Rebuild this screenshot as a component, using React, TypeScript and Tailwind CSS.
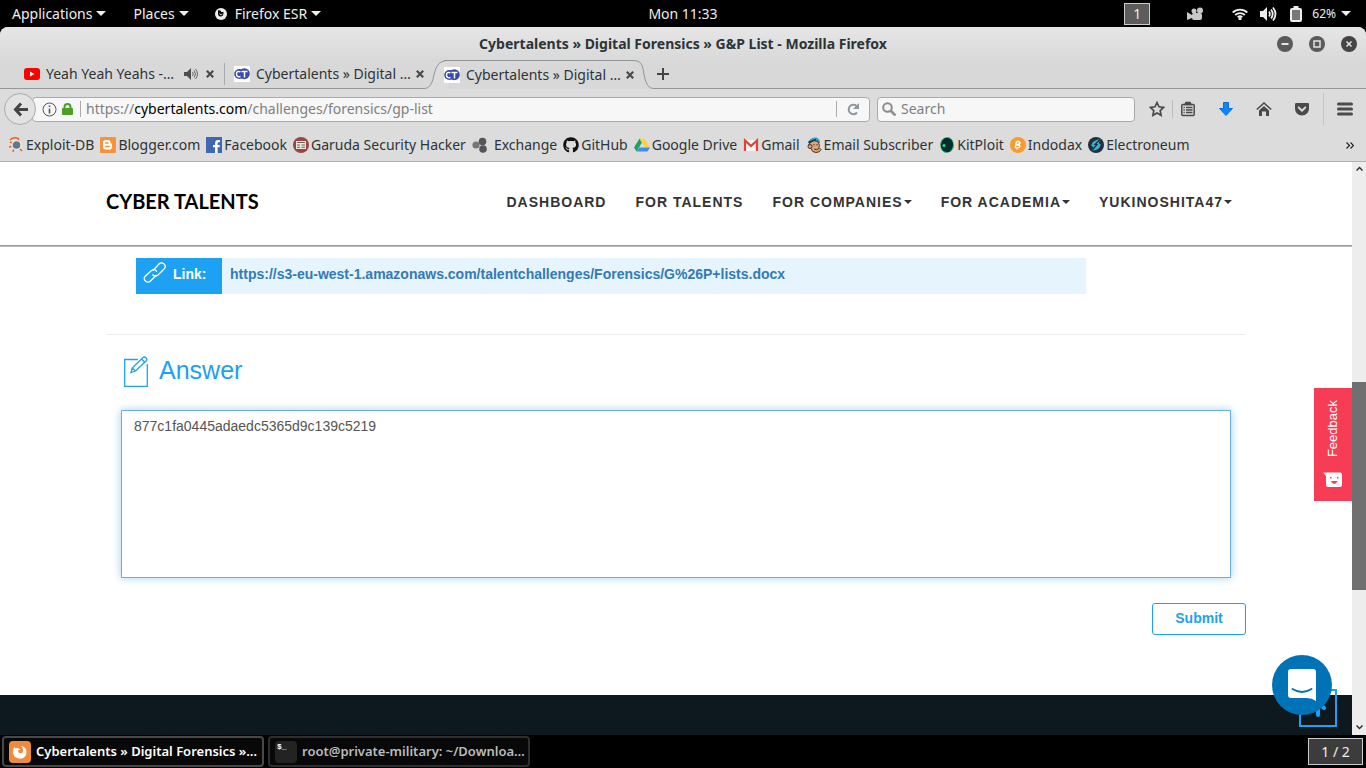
import type { ReactNode } from "react";
import { FaGithub, FaGetPocket, FaFacebookF } from "react-icons/fa";

export default function App() {
  return (
    <div className="flex min-h-screen flex-col bg-black font-['Noto_Sans',sans-serif] text-sm text-[#2e3436]">
      <TopBar />
      <div className="flex flex-1 flex-col overflow-hidden rounded-t-lg bg-[#dcdcdc]">
        <TitleBar />
        <TabStrip />
        <Toolbar />
        <Bookmarks />
        <div className="flex flex-1">
          <Page />
          <Scrollbar />
        </div>
      </div>
      <Taskbar />
    </div>
  );
}

function Caret() {
  return (
    <svg width="10" height="5" viewBox="0 0 10 5" fill="currentColor">
      <path d="M0 0h10L5 5z" />
    </svg>
  );
}

function TopBar() {
  return (
    <header className="grid h-[27px] grid-cols-[1fr_auto_1fr] items-center text-sm text-[#eeeeec]">
      <nav className="flex items-center pl-3">
        <button className="flex items-center gap-1">
          Applications <Caret />
        </button>
        <button className="ml-[27px] flex items-center gap-1">
          Places <Caret />
        </button>
        <button className="ml-[26px] flex items-center gap-1">
          <svg className="mr-1" width="12" height="12" viewBox="0 0 12 12">
            <circle cx="6" cy="6" r="6" fill="#eee" />
            <path d="M3 2.500c2-.6 3 .3 3.200 1.500H8.500c.3 3-1 4.500-3 4.500C3.800 8.500 2.800 7 3 5.500z" fill="#000" />
            <path d="M4.500 5.500C5 7 6.500 7 7.500 6" stroke="#eee" fill="none" />
          </svg>
          Firefox ESR <Caret />
        </button>
      </nav>
      <time>Mon 11:33</time>
      <div className="flex items-center justify-end pr-[15px]">
        <button className="flex h-[22px] w-[26px] items-center justify-center border border-[#ccc] bg-[#5c5c5c]">1</button>
        <svg className="ml-[37px]" width="17" height="14" viewBox="0 0 17 14" fill="#c8c8c8">
          <circle cx="7" cy="4" r="2.500" />
          <circle cx="13" cy="3.500" r="3" />
          <rect x="5" y="6" width="10" height="7" rx="2" />
          <path d="M0 5l5 3v3l-5 2z" />
        </svg>
        <svg className="ml-7" width="16" height="12" viewBox="0 0 16 12" fill="none" stroke="#eee" strokeWidth="1.800">
          <path d="M.7 4.500a10.500 10.500 0 0 1 14.600 0M3.200 7a7 7 0 0 1 9.600 0M5.700 9.300a3.500 3.500 0 0 1 4.600 0" />
          <circle cx="8" cy="10.700" r=".7" fill="#eee" />
        </svg>
        <svg className="ml-3" width="17" height="16" viewBox="0 0 17 16" fill="none" stroke="#eee" strokeWidth="1.800">
          <path d="M0 5h3l4-4v14l-4-4H0z" fill="#eee" stroke="none" />
          <path d="M9 5.500q1.800 2.500 0 5M11 3.500q3.400 4.500 0 9M13 1.500q5 6.500 0 13" />
        </svg>
        <svg className="ml-[13px]" width="12" height="16" viewBox="0 0 12 16">
          <path d="M3.500 0h5v3h-5z" fill="#eee" />
          <rect x="1" y="3" width="10" height="12" rx="1" fill="#777" stroke="#eee" strokeWidth="2" />
        </svg>
        <span className="mr-[5px] ml-[10px] text-xs">62%</span>
        <Caret />
      </div>
    </header>
  );
}

function TitleBar() {
  return (
    <div className="grid h-[33px] grid-cols-[1fr_auto_1fr] items-center bg-linear-to-b from-[#e6e6e6] to-[#d9d9d9] px-[9px]">
      <span />
      <h1 className="text-sm leading-8 font-bold">Cybertalents » Digital Forensics » G&amp;P List - Mozilla Firefox</h1>
      <div className="flex justify-end gap-4 text-[#5a5a5a]">
        <WindowButton label="Minimize">
          <path d="M4.500 8h7" strokeWidth="2" />
        </WindowButton>
        <WindowButton label="Maximize">
          <path d="M5 5h6v6H5z" strokeWidth="1.500" />
        </WindowButton>
        <WindowButton label="Close">
          <path d="M5.500 5.500l5 5M10.500 5.500l-5 5" strokeWidth="1.500" />
        </WindowButton>
      </div>
    </div>
  );
}

function WindowButton({ label, children }: { label: string; children: ReactNode }) {
  return (
    <button aria-label={label} className="last:text-[#444]">
      <svg width="16" height="16" viewBox="0 0 16 16" fill="none" stroke="#e4e4e4">
        <circle cx="8" cy="8" r="8" fill="currentColor" stroke="none" />
        {children}
      </svg>
    </button>
  );
}

function CloseTab() {
  return (
    <button aria-label="Close tab">
      <svg width="8" height="8" viewBox="0 0 8 8" stroke="#4a4a4a" strokeWidth="2.200">
        <path d="M.8.8l6.400 6.400M7.200.8L.8 7.200" />
      </svg>
    </button>
  );
}

function CtIcon() {
  return (
    <svg width="16" height="16" viewBox="0 0 16 16">
      <path fill="#fff" d="M0 0h16v16H0z" />
      <ellipse cx="5.500" cy="8" rx="5.300" ry="5" fill="#3a49ae" />
      <circle cx="10.300" cy="7.700" r="5.500" fill="#3a49ae" />
      <path d="M6.500 5.800Q2.500 4.500 2.500 8t4 2.500M7.500 5.500h6M10.500 5.500v6" fill="none" stroke="#fff" strokeWidth="1.500" />
    </svg>
  );
}

function TabStrip() {
  return (
    <div className="flex h-[29px] bg-[#d8d8d8]">
      <div className="flex items-center border-b border-[#989898] pl-6">
        <svg width="16" height="12" viewBox="0 0 16 12">
          <rect width="16" height="12" rx="3" fill="#f00" />
          <path d="M6 3.500v5L10.500 6z" fill="#fff" />
        </svg>
        <span className="ml-[6px] w-[138px] truncate">Yeah Yeah Yeahs -…</span>
        <svg className="mr-2" width="14" height="12" viewBox="0 0 14 12" fill="none" stroke="#666">
          <path d="M0 4h3l4-4v12L3 8H0z" fill="#4d4d4d" stroke="none" />
          <path d="M8.500 4q1.500 2 0 4M10 2.500q3 3.500 0 7M11.500 1q4 5 0 10" />
        </svg>
        <CloseTab />
        <span className="mr-[9px] ml-[10px] h-[22px] w-px bg-[#aaa]" />
        <CtIcon />
        <span className="ml-[6px] w-[160px] truncate">Cybertalents » Digital …</span>
        <CloseTab />
      </div>
      <svg width="24" height="29" viewBox="0 0 24 29" className="shrink-0">
        <path d="M0 28.500C5 28.500 7.500 25 9.500 17S13 .5 24 .5V29H0z" fill="#dcdcdc" />
        <path d="M0 28.500C5 28.500 7.500 25 9.500 17S13 .5 24 .5" fill="none" stroke="#8f9498" />
      </svg>
      <div className="-mx-1 flex items-center border-t border-[#8f9498]">
        <CtIcon />
        <span className="ml-[6px] w-[160px] truncate">Cybertalents » Digital …</span>
        <CloseTab />
      </div>
      <svg width="24" height="29" viewBox="0 0 24 29" className="shrink-0">
        <path d="M3 .5C14 .5 12.500 9 14.500 17S19 28.500 24 28.500" fill="none" stroke="#8f9498" />
      </svg>
      <div className="flex flex-1 items-center border-b border-[#989898] pl-[3px]">
        <button aria-label="New tab">
          <svg width="12" height="12" viewBox="0 0 12 12" stroke="#444" strokeWidth="2">
            <path d="M6 0v12M0 6h12" />
          </svg>
        </button>
      </div>
    </div>
  );
}

function Toolbar() {
  return (
    <div className="flex h-10 items-center pr-[13px] pl-1">
      <button aria-label="Back" className="z-10 flex size-8 items-center justify-center rounded-full border border-[#aaa] bg-[#e2e2e2]">
        <svg width="15" height="15" viewBox="0 0 15 15" fill="none" stroke="#444" strokeWidth="3">
          <path d="M8 1.500L2.500 7.500 8 13.500M2.500 7.500H15" />
        </svg>
      </button>
      <div className="-ml-1 flex h-[25px] flex-1 items-center rounded-sm border border-[#aaa] bg-[#f7f7f7] px-[9px]">
        <svg width="15" height="15" viewBox="0 0 15 15" fill="none" stroke="#555">
          <circle cx="7.500" cy="7.500" r="6.500" />
          <path d="M7.500 3.500v1.500M7.500 6.500v5" strokeWidth="1.600" />
        </svg>
        <svg className="ml-[5px]" width="11" height="12" viewBox="0 0 11 12">
          <path d="M2.500 6V4a3 3 0 0 1 6 0v2" fill="none" stroke="#4a9f26" strokeWidth="2" />
          <rect y="5" width="11" height="7" rx="1" fill="#4a9f26" />
        </svg>
        <span className="mr-[5px] ml-[7px] h-4 w-px bg-[#aaa]" />
        <a href="#url" className="flex-1 text-[#808080]">
          https://<span className="text-black">cybertalents.com</span>/challenges/forensics/gp-list
        </a>
        <span className="mr-[10px] h-4 w-px bg-[#aaa]" />
        <button aria-label="Reload">
          <svg width="13" height="13" viewBox="0 0 13 13">
            <path d="M10 9.500A4.700 4.700 0 1 1 9.500 3" fill="none" stroke="#8b98a3" strokeWidth="2" />
            <path d="M12 0v6H6z" fill="#8b98a3" />
          </svg>
        </button>
      </div>
      <label className="ml-[7px] flex h-[25px] w-[258px] items-center rounded-sm border border-[#aaa] bg-[#f7f7f7] pl-1">
        <svg width="14" height="14" viewBox="0 0 14 14" fill="none" stroke="#8c8c8c" strokeWidth="2">
          <circle cx="5.500" cy="5.500" r="4.300" />
          <path d="M8.500 8.500l5 5" strokeWidth="2.500" />
        </svg>
        <input aria-label="Search" placeholder="Search" className="ml-[5px] min-w-0 flex-1 outline-none placeholder:text-[#808080]" />
      </label>
      <div className="ml-[14px] flex items-center text-[#4a4a4a]">
        <button aria-label="Bookmark this page">
          <svg width="16" height="16" viewBox="0 0 16 16" fill="none" stroke="currentColor" strokeWidth="1.700">
            <path d="M8 1.500l2 4.300 4.700.6-3.500 3.200.9 4.700L8 12l-4.100 2.300.9-4.700L1.300 6.400 6 5.800z" />
          </svg>
        </button>
        <span className="mx-[7px] h-[18px] w-px bg-[#bbb]" />
        <button aria-label="Library">
          <svg width="16" height="16" viewBox="0 0 16 16" fill="none" stroke="currentColor" strokeWidth="1.500">
            <path d="M5 3.500L6 1.500h4l1 2z" fill="currentColor" />
            <rect x="1.800" y="3.500" width="12.400" height="11" rx="1" />
            <path d="M3.500 6.500h1.300M6 6.500h6.500M3.500 9h1.300M6 9h6.500M3.500 11.500h1.300M6 11.500h6.500" />
          </svg>
        </button>
        <button aria-label="Downloads" className="ml-[22px]">
          <svg width="16" height="16" viewBox="0 0 16 16">
            <path d="M5.500 1.500h5v6h4L8 14.500l-6.500-7h4z" fill="#0a84ff" stroke="#0b6fd6" />
          </svg>
        </button>
        <button aria-label="Home" className="ml-[22px]">
          <svg width="16" height="16" viewBox="0 0 16 16">
            <path d="M.8 8.500L8 2l7.200 6.500" fill="none" stroke="currentColor" strokeWidth="1.600" />
            <path d="M3 9.500l5-4.500 5 4.500V15h-3v-4.500H6V15H3z" fill="currentColor" />
          </svg>
        </button>
        <button aria-label="Pocket" className="ml-[22px]">
          <FaGetPocket size={16} />
        </button>
        <span className="mx-[13px] h-8 w-px bg-[#c4c4c4]" />
        <button aria-label="Menu">
          <svg width="16" height="14" viewBox="0 0 16 14" stroke="currentColor" strokeWidth="3" strokeLinecap="round">
            <path d="M1.500 2h13M1.500 7h13M1.500 12h13" />
          </svg>
        </button>
      </div>
    </div>
  );
}

function Bookmarks() {
  return (
    <nav className="flex h-[33px] items-center gap-[6px] border-b border-[#b0b0b0] pr-3 pl-2">
      <Bookmark label="Exploit-DB">
        <path d="M2 5l4 2M1 10l4-1M5 15l1-4M14 14l-3-3M11 2l-2 3" stroke="#e86a24" strokeWidth="1.500" />
        <circle cx="8.500" cy="8" r="4.500" fill="#62778a" stroke="#e8e8e8" strokeWidth="1.500" />
        <path d="M2 3q4-4 9-1" fill="none" stroke="#e86a24" strokeWidth="1.500" />
      </Bookmark>
      <Bookmark label="Blogger.com">
        <rect width="16" height="16" rx="1" fill="#f5923a" />
        <path d="M5.500 3H8q2.500 0 2.500 2.500 0 1.200 1.500 1.200v3q0 2.800-2.500 2.800h-4Q3 12.500 3 10V5.500Q3 3 5.500 3z" fill="#fff" />
        <path d="M5.500 6h2.500M5.500 9.500h4" stroke="#f5923a" strokeWidth="1.400" strokeLinecap="round" />
      </Bookmark>
      <Bookmark label="Facebook">
        <path fill="#4267b2" d="M0 0h16v16H0z" />
        <FaFacebookF x="4" y="3" size={13} color="#fff" />
      </Bookmark>
      <Bookmark label="Garuda Security Hacker">
        <circle cx="8" cy="8" r="8" fill="#9c4444" />
        <rect x="3" y="4" width="10" height="8" fill="#eee9dc" />
        <path d="M4 5.500h8M4 8h3M8.500 8H12M4 10.300h3M8.500 10.300H12" stroke="#6b6458" />
      </Bookmark>
      <Bookmark label="Exchange" wide>
        <circle cx="4" cy="8" r="3.600" fill="#777" />
        <circle cx="10.500" cy="4.500" r="3.800" fill="#555" />
        <circle cx="11" cy="12" r="3.800" fill="#555" />
      </Bookmark>
      <Bookmark label="GitHub">
        <FaGithub size={16} color="#111" />
      </Bookmark>
      <Bookmark label="Google Drive">
        <path d="M5.500 1.500L0 10.500l2.500 4L8 5.500z" fill="#1da462" />
        <path d="M5.500 1.500h5l5.500 9h-5z" fill="#ffcf48" />
        <path d="M5.200 10.500H16l-2.500 4h-11z" fill="#4688f1" />
      </Bookmark>
      <Bookmark label="Gmail">
        <path d="M1 3h14v11H1z" fill="#f4f4f4" />
        <path d="M2 14V3.500l6 5.500 6-5.500V14" fill="none" stroke="#db4437" strokeWidth="2.200" />
      </Bookmark>
      <Bookmark label="Email Subscriber">
        <path d="M2 6q1-5 7-5.500 5 0 5 5.500z" fill="#3a9cc8" />
        <path d="M3 7l4-3.500 5 1 1.500 4-.5 2 2 2q-1 3-5 3-4 0-5-4L2.500 10z" fill="#dba77c" stroke="#4c3326" />
        <path d="M8 7v1.500M11 7v1.500M8 12q3 1.500 5-.5" fill="none" stroke="#4c3326" />
        <circle cx="4" cy="9.500" r="2" fill="#dba77c" stroke="#4c3326" />
        <path d="M2.500 5.500L10 2.500" stroke="#26333d" strokeWidth="1.500" />
      </Bookmark>
      <Bookmark label="KitPloit">
        <ellipse cx="8" cy="8" rx="6.500" ry="7.500" fill="#062d2c" stroke="#19b676" strokeDasharray="8 3" />
        <circle cx="5" cy="8.500" r="1.500" fill="#12e88d" />
      </Bookmark>
      <Bookmark label="Indodax">
        <circle cx="8" cy="8" r="8" fill="#f79b30" />
        <path d="M6.500 4.500L5.200 11.200M6 4.800h2.800q1.600.3 1 1.800-.5 1.200-3.600 1.200 4.200 0 3.600 1.800-.5 1.500-4.300 1.300M8 3.500l-.2 1.200M7 11.300l-.2 1.200" fill="none" stroke="#fff" strokeWidth="1.400" />
      </Bookmark>
      <Bookmark label="Electroneum">
        <circle cx="8" cy="8" r="8" fill="#22303c" />
        <path d="M12.500 2Q5 3 3.500 7.500q-.5 2 2 2.300L3.500 14Q11 13 12.500 8.500q.5-2-2-2.300z" fill="#35b5dc" />
        <path d="M12 2.500L7 7.500h2L4 13.500" fill="none" stroke="#22303c" strokeWidth="1.200" />
      </Bookmark>
      <button aria-label="More bookmarks" className="ml-auto">
        <svg width="8" height="7" viewBox="0 0 8 7" fill="none" stroke="#222" strokeWidth="1.200">
          <path d="M.5.5l3 3-3 3M4.500.5l3 3-3 3" />
        </svg>
      </button>
    </nav>
  );
}

function Bookmark({ label, wide, children }: { label: string; wide?: boolean; children: ReactNode }) {
  return (
    <a href="#bookmark" className={`flex items-center whitespace-nowrap ${wide ? "gap-[6px]" : "gap-[2px]"}`}>
      <svg width="16" height="16" viewBox="0 0 16 16" className="shrink-0">
        {children}
      </svg>
      {label}
    </a>
  );
}

function Page() {
  return (
    <div className="relative flex min-w-0 flex-1 flex-col bg-white font-['Liberation_Sans',Arial,sans-serif]">
      <div className="border-b border-[#999] shadow-[0_1px_0_#bbb]">
        <div className="mx-auto flex h-[83px] w-full max-w-[1140px] items-center justify-between pr-[14px]">
          <a href="#home" className="pb-[6px] font-['Lato',sans-serif] text-xl font-bold text-black">
            CYBER TALENTS
          </a>
          <nav className="flex gap-[29px] pb-1 text-sm font-bold tracking-[1px] text-[#333]">
            <a href="#dashboard">DASHBOARD</a>
            <a href="#talents">FOR TALENTS</a>
            <MenuLink label="FOR COMPANIES" />
            <MenuLink label="FOR ACADEMIA" />
            <MenuLink label="YUKINOSHITA47" />
          </nav>
        </div>
      </div>

      <main className="mx-auto w-full max-w-[1140px] flex-1">
        <div className="mx-[30px] mt-3 flex h-9 max-w-[950px] bg-[#e6f4fe] text-sm font-bold">
          <div className="flex w-[86px] bg-[#1da1f2] pt-[3px] pl-[7px] text-white">
            <svg width="24" height="24" viewBox="0 0 24 24" fill="none" stroke="currentColor" strokeWidth="1.300">
              <path d="M10 9.500l6-6.500c3-3 8 1 5.500 4.500l-6.500 6.500c-2.500 2-4.500.8-5.500-.5" />
              <path d="M13.500 14l-6 6c-3 3-8-1-5.500-4.500L8.500 9.500c2.500-2 5-.5 5.200 1.500" />
            </svg>
            <span className="ml-[6px] pt-[3px]">Link:</span>
          </div>
          <a href="#docx" className="pt-[6px] pl-2 text-[#337ab7]">
            https://s3-eu-west-1.amazonaws.com/talentchallenges/Forensics/G%26P+lists.docx
          </a>
        </div>

        <hr className="mt-10 border-[#eee]" />

        <form onSubmit={(e) => e.preventDefault()}>
          <label htmlFor="answer" className="mt-5 ml-[18px] flex h-8 items-center gap-[11px] text-[25px] leading-[30px] text-[#1da1f2]">
            <svg width="24" height="31" viewBox="0 0 24 31" fill="none" stroke="currentColor" strokeWidth="1.300">
              <path d="M14 3.500H.7v26.800h22.600V8" />
              <path d="M7 16.500l1.200-4.500L19 1.500q1.500-1.200 3 .3t.3 3L11.500 15zM17.500 3l3.300 3.300M8.200 12l3.300 3" />
            </svg>
            <span className="pb-[2px]">Answer</span>
          </label>
          <div className="mx-[15px] mt-[23px]">
            <textarea
              id="answer"
              defaultValue="877c1fa0445adaedc5365d9c139c5219"
              className="block h-[168px] w-full resize-none border border-[#66afe9] px-3 py-[5px] text-sm text-[#555] shadow-[0_0_8px_rgba(102,175,233,0.6)] outline-none"
            />
          </div>
          <div className="mt-[25px] mb-[60px] flex justify-end">
            <button className="h-8 w-[94px] rounded-[3px] border border-[#1da1f2] pb-[2px] text-sm font-bold text-[#1da1f2]">Submit</button>
          </div>
        </form>
      </main>

      <footer className="h-10 bg-[#0d191f]" />

      <button className="absolute top-[226px] right-0 flex h-[113px] w-[38px] flex-col items-center justify-between bg-[#f73d55] pt-3 pb-[14px] text-[13px] text-white">
        <span className="rotate-180 leading-4 [writing-mode:vertical-rl]">Feedback</span>
        <svg width="20" height="15" viewBox="0 0 20 15">
          <path d="M0 .5h17q2 0 2 2V13q0 2-2 2H5q-2 0-2-2V4z" fill="#fff" />
          <path d="M7 5h1.500v1.500H7zM14 5h1.500v1.500H14zM8 9h6.500q-1 3-3.200 3T8 9z" fill="#f73d55" />
        </svg>
      </button>

      <a href="#top" aria-label="Back to top" className="absolute right-[15px] bottom-2 flex size-[38px] items-center justify-center border-2 border-[#1da1f2]">
        <svg width="18" height="18" viewBox="0 0 18 18" fill="none" stroke="#1da1f2" strokeWidth="4" strokeLinecap="round">
          <path d="M9 16V3M3 9l6-6 6 6" />
        </svg>
      </a>
      <button aria-label="Open messenger" className="absolute right-5 bottom-5 flex size-[60px] items-center justify-center rounded-full bg-[#0073b7]">
        <svg width="28" height="32" viewBox="0 0 28 32">
          <path d="M3 0h22q3 0 3 3v29q-4-3-9-3H3q-3 0-3-3V3q0-3 3-3z" fill="#fff" />
          <path d="M4.500 20q9.500 6 19 0" fill="none" stroke="#0073b7" strokeWidth="2" strokeLinecap="round" />
        </svg>
      </button>
    </div>
  );
}

function MenuLink({ label }: { label: string }) {
  return (
    <a href="#menu" className="flex items-center gap-px">
      {label}
      <svg width="8" height="4" viewBox="0 0 8 4" fill="currentColor">
        <path d="M0 0h8L4 4z" />
      </svg>
    </a>
  );
}

function Scrollbar() {
  return (
    <div className="flex w-[14px] flex-col items-center bg-[#ededed]">
      <svg className="my-1" width="7" height="5" viewBox="0 0 7 5" fill="none" stroke="#333" strokeWidth="1.500">
        <path d="M.5 4.500l3-3 3 3" />
      </svg>
      <span className="mt-[207px] h-[208px] w-full bg-[#707070]" />
      <svg className="mt-auto mb-[5px]" width="7" height="5" viewBox="0 0 7 5" fill="none" stroke="#333" strokeWidth="1.500">
        <path d="M.5.5l3 3 3-3" />
      </svg>
    </div>
  );
}

function Taskbar() {
  return (
    <footer className="flex h-[33px] items-center bg-black pr-[3px] pl-[2px] text-[13px] font-semibold">
      <button className="mr-1 flex h-[31px] w-[262px] items-center gap-[5px] rounded-[4px] border-2 border-[#484848] bg-[#080808] pl-[5px] text-white">
        <svg className="shrink-0" width="22" height="22" viewBox="0 0 22 22">
          <rect width="22" height="22" rx="4" fill="#f08a3c" />
          <path d="M5 6l1.500 1.500Q8 6.500 10 7.500L11.500 9H9.500q-1 3 2 3.200 3.500 0 2.500-4-.5-2.500-2.500-3.200 6 .5 6 6.500-.5 6-6.500 6.200-6.500-.5-7-6.200Q4 8 5 6z" fill="#fff" />
        </svg>
        <span className="truncate">Cybertalents » Digital Forensics »…</span>
      </button>
      <button className="flex h-[31px] w-[262px] items-center gap-[5px] rounded-[4px] border-2 border-[#2e2e2e] bg-[#080808] pl-[5px] text-[#bbb]">
        <span className="h-[22px] w-[22px] shrink-0 rounded bg-[#232323] pl-[2px] text-left font-['Liberation_Mono',monospace] text-[8px] leading-3 text-white">$_</span>
        <span className="truncate">root@private-military: ~/Downloa…</span>
      </button>
      <span className="ml-auto flex h-[27px] w-[55px] items-center justify-center border border-[#ccc] bg-[#3c3c3c] text-sm font-normal text-[#eee]">1 / 2</span>
    </footer>
  );
}
